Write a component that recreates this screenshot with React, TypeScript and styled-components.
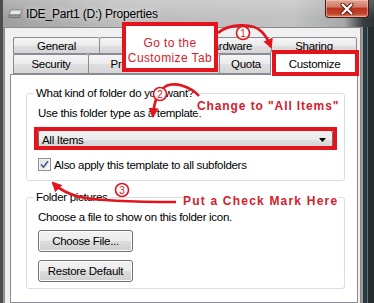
import React from "react";
import styled, { createGlobalStyle } from "styled-components";

const RED = "#e3141c";
const INK = "#d4202a";

const GlobalStyle = createGlobalStyle`
  html, body {
    margin: 0;
    padding: 0;
    background: #2c3133;
  }
  body {
    font-family: "Liberation Sans", Arial, sans-serif;
    font-size: 11.5px;
    color: #000;
  }
`;

const Stage = styled.div`
  position: relative;
  width: 374px;
  height: 303px;
  overflow: hidden;
`;

const Screen = styled.div`
  width: 100%;
  height: 100%;
  box-sizing: border-box;
  display: flex;
  flex-direction: column;
  border-left: 3px solid #4d4d4d;
  background: linear-gradient(to right, #9e9e9e 0, #bcbcbc 30%, #c2c2c2 78%, #a6a8a9 92%, #3a3f42 97%, #2c3133 100%);
`;

const TitleBar = styled.div`
  height: 27px;
  flex: none;
  display: flex;
  align-items: center;
  padding-left: 5px;
  background: linear-gradient(to bottom, rgba(255, 255, 255, 0.22), rgba(255, 255, 255, 0) 70%);
`;

const Title = styled.span`
  margin-left: 3px;
  font-size: 12px;
  letter-spacing: -0.2px;
  color: #000;
  text-shadow: 0 0 6px rgba(255, 255, 255, 0.9);
`;

const CloseButton = styled.div`
  align-self: flex-start;
  margin-left: auto;
  margin-right: 5px;
  width: 44px;
  height: 18px;
  box-sizing: border-box;
  display: flex;
  align-items: center;
  justify-content: center;
  border: 1px solid #4a1a14;
  border-top: none;
  border-radius: 0 0 4px 4px;
  background: linear-gradient(to bottom, #e2a595 0, #d27a66 40%, #b8341f 50%, #c2442c 80%, #df8a6c 100%);
  box-shadow: inset 0 0 0 1px rgba(255, 220, 210, 0.45);
`;

const Body = styled.div`
  flex: 1;
  display: flex;
  min-height: 0;
`;

const LeftEdge = styled.div`
  width: 1px;
  background: #9a9a9a;
`;

const Client = styled.div`
  width: 357px;
  flex: none;
  box-sizing: border-box;
  display: flex;
  flex-direction: column;
  background: #f0f0f0;
  border: 1px solid #8a8a8a;
  border-bottom: none;
  padding: 9px 2px 0 5px;
`;

const RightFrame = styled.div`
  flex: 1;
  background: linear-gradient(to right, #9c9c9c 0, #9c9c9c 2px, #30383b 2px, #30383b 6px, #3f7f8c 6px, #3f7f8c 7px, #262c2e 7px);
`;

const TabArea = styled.div`
  padding: 0 1px 0 3px;
  display: flex;
  flex-direction: column;
`;

const TabRow = styled.div<{ $h: number }>`
  display: flex;
  height: ${(p) => p.$h}px;
`;

const Tab = styled.div<{ $w: number; $active?: boolean }>`
  flex: none;
  box-sizing: border-box;
  width: ${(p) => p.$w}px;
  display: flex;
  align-items: center;
  justify-content: center;
  border: 1px solid #898c95;
  border-right: none;
  border-radius: 2px 2px 0 0;
  letter-spacing: -0.3px;
  background: linear-gradient(to bottom, #f5f5f5, #ebebeb 50%, #dfdfdf 51%, #d6d6d6);
  &:last-child {
    border-right: 1px solid #898c95;
  }
  ${(p) =>
    p.$active &&
    `
    position: relative;
    z-index: 1;
    height: 24px;
    margin: -3px -2px -1px -2px;
    width: ${p.$w + 4}px;
    background: #fff;
    border-bottom: none;
  `}
`;

const Panel = styled.div`
  flex: 1;
  background: #fff;
  border: 1px solid #898c95;
  padding: 0 12px 0 15px;
`;

const Group = styled.fieldset<{ $gap: number }>`
  margin: ${(p) => p.$gap}px 0 0;
  padding: 0 10px 0 11px;
  border: 1px solid #d5dfe5;
  border-radius: 3px;
  min-width: 0;
`;

const Legend = styled.legend`
  padding: 0 2px;
  margin-left: -4px;
  line-height: 14px;
  letter-spacing: -0.3px;
`;

const Line = styled.div<{ $top: number }>`
  margin-top: ${(p) => p.$top}px;
  line-height: 14px;
  letter-spacing: -0.3px;
  white-space: nowrap;
`;

const Combo = styled.div`
  margin-top: 10px;
  height: 20px;
  box-sizing: border-box;
  display: flex;
  align-items: center;
  justify-content: space-between;
  padding: 0 6px 0 3px;
  margin-right: 1px;
  border: 1px solid #707070;
  border-radius: 3px;
  letter-spacing: -0.3px;
  background: linear-gradient(to bottom, #f2f2f2, #ebebeb 50%, #dddddd 51%, #cfcfcf);
`;

const CheckRow = styled.label`
  margin-top: 8px;
  margin-bottom: 9px;
  display: flex;
  align-items: center;
  gap: 3px;
  height: 13px;
  letter-spacing: -0.3px;
  white-space: nowrap;
`;

const CheckBox = styled.span`
  width: 13px;
  height: 13px;
  box-sizing: border-box;
  border: 1px solid #8e8f8f;
  background: linear-gradient(to bottom right, #dcdcdc, #fbfbfb);
  box-shadow: inset 0 0 0 1px #f4f4f4;
  display: flex;
  align-items: center;
  justify-content: center;
`;

const Button = styled.div<{ $top: number }>`
  margin-top: ${(p) => p.$top}px;
  width: 95px;
  height: 22px;
  box-sizing: border-box;
  display: flex;
  align-items: center;
  justify-content: center;
  border: 1px solid #707070;
  border-radius: 3px;
  letter-spacing: -0.3px;
  background: linear-gradient(to bottom, #f2f2f2, #ebebeb 50%, #dddddd 51%, #cfcfcf);
  box-shadow: inset 0 0 0 1px #fcfcfc;
`;

const ButtonStack = styled.div`
  padding-bottom: 6px;
`;

/* annotation layer, drawn over the dialog */

const Annotations = styled.div`
  position: absolute;
  inset: 0;
  z-index: 5;
  pointer-events: none;
`;

const Frame = styled.div<{ $x: number; $y: number; $w: number; $h: number; $fill?: boolean }>`
  position: absolute;
  left: ${(p) => p.$x}px;
  top: ${(p) => p.$y}px;
  width: ${(p) => p.$w}px;
  height: ${(p) => p.$h}px;
  box-sizing: border-box;
  border: 4px solid ${RED};
  background: ${(p) => (p.$fill ? "#fff" : "transparent")};
`;

const CalloutText = styled.div`
  padding-top: 10px;
  text-align: center;
  color: ${INK};
  font-size: 12px;
  line-height: 15px;
  letter-spacing: 0.4px;
`;

const Note = styled.div<{ $x: number; $y: number; $spacing: number }>`
  position: absolute;
  left: ${(p) => p.$x}px;
  top: ${(p) => p.$y}px;
  color: ${INK};
  font-weight: bold;
  font-size: 12px;
  line-height: 14px;
  letter-spacing: ${(p) => p.$spacing}px;
  white-space: nowrap;
  background: #fff;
`;

const Overlay = styled.svg`
  position: absolute;
  left: 0;
  top: 0;
`;

const DriveIcon = () => (
  <svg width="15" height="10" viewBox="0 0 15 10">
    <path d="M3 1 L14 1 L12 6 L1 6 Z" fill="#e8e8e8" stroke="#7d7d7d" strokeWidth="0.8" />
    <path d="M1 6 L12 6 L12 8.5 L1 8.5 Z" fill="#9a9a9a" stroke="#6a6a6a" strokeWidth="0.8" />
    <path d="M12 6 L14 1 L14 3.5 L12 8.5 Z" fill="#8a8a8a" />
    <rect x="9" y="6.8" width="2" height="1" fill="#3fd04a" />
  </svg>
);

const CloseX = () => (
  <svg width="14" height="12" viewBox="0 0 14 12">
    <path d="M2.5 1.5 L11.5 10.5 M11.5 1.5 L2.5 10.5" stroke="#5a1a10" strokeWidth="4" strokeLinecap="round" />
    <path d="M2.5 1.5 L11.5 10.5 M11.5 1.5 L2.5 10.5" stroke="#fff" strokeWidth="2.2" strokeLinecap="round" />
  </svg>
);

const Tick = () => (
  <svg width="9" height="9" viewBox="0 0 9 9">
    <path d="M1 4.5 L3.5 7.2 L8 1.2" fill="none" stroke="#4a5e8c" strokeWidth="1.7" />
  </svg>
);

const Caret = () => (
  <svg width="7" height="4" viewBox="0 0 7 4">
    <path d="M0 0 L7 0 L3.5 4 Z" fill="#000" />
  </svg>
);

const Step = ({ cx, cy, n }: { cx: number; cy: number; n: string }) => (
  <g>
    <circle cx={cx} cy={cy} r="6.5" fill="#fff" stroke={RED} strokeWidth="1.6" />
    <text
      x={cx}
      y={cy + 3.6}
      textAnchor="middle"
      fontFamily="Liberation Sans, Arial, sans-serif"
      fontSize="10"
      fill={RED}
    >
      {n}
    </text>
  </g>
);

const row1 = [
  { label: "General", w: 86 },
  { label: "Tools", w: 86 },
  { label: "Hardware", w: 86 },
  { label: "Sharing", w: 86 },
];
const row2 = [
  { label: "Security", w: 75 },
  { label: "Previous Versions", w: 131 },
  { label: "Quota", w: 53 },
  { label: "Customize", w: 85, active: true },
];

export default function App() {
  return (
    <Stage>
      <GlobalStyle />
      <Screen>
        <TitleBar>
          <DriveIcon />
          <Title>IDE_Part1 (D:) Properties</Title>
          <CloseButton>
            <CloseX />
          </CloseButton>
        </TitleBar>
        <Body>
          <LeftEdge />
          <Client>
            <TabArea>
              <TabRow $h={17}>
                {row1.map((t) => (
                  <Tab key={t.label} $w={t.w}>
                    {t.label}
                  </Tab>
                ))}
              </TabRow>
              <TabRow $h={20}>
                {row2.map((t) => (
                  <Tab key={t.label} $w={t.w} $active={t.active}>
                    {t.label}
                  </Tab>
                ))}
              </TabRow>
            </TabArea>
            <Panel>
              <Group $gap={11}>
                <Legend>What kind of folder do you want?</Legend>
                <Line $top={6}>Use this folder type as a template:</Line>
                <Combo>
                  <span>All Items</span>
                  <Caret />
                </Combo>
                <CheckRow>
                  <CheckBox>
                    <Tick />
                  </CheckBox>
                  Also apply this template to all subfolders
                </CheckRow>
              </Group>
              <Group $gap={9}>
                <Legend>Folder pictures</Legend>
                <Line $top={6}>Choose a file to show on this folder icon.</Line>
                <ButtonStack>
                  <Button $top={6}>Choose File...</Button>
                  <Button $top={8}>Restore Default</Button>
                </ButtonStack>
              </Group>
            </Panel>
          </Client>
          <RightFrame />
        </Body>
      </Screen>

      <Annotations>
        <Frame $x={122} $y={22} $w={96} $h={50} $fill>
          <CalloutText>
            Go to the
            <br />
            Customize Tab
          </CalloutText>
        </Frame>
        <Frame $x={272} $y={50} $w={87} $h={26} />
        <Frame $x={34} $y={127} $w={303} $h={23} />
        <Note $x={197} $y={99} $spacing={0.9}>
          Change to "All Items"
        </Note>
        <Note $x={183} $y={194} $spacing={1.2}>
          Put a Check Mark Here
        </Note>

        <Overlay width="374" height="303" viewBox="0 0 374 303">
          <defs>
            <marker id="head" viewBox="0 0 10 10" refX="8" refY="5" markerWidth="10" markerHeight="10" markerUnits="userSpaceOnUse" orient="auto">
              <path d="M0 0 L10 5 L0 10 Z" fill={RED} />
            </marker>
          </defs>
          <path d="M218 33 C228 24 252 22 262 32 C267 37 269 42 271 47" fill="none" stroke={RED} strokeWidth="2.6" markerEnd="url(#head)" />
          <path d="M199 96 C190 86 175 82 166 86 C157 92 154 102 153 116" fill="none" stroke={RED} strokeWidth="2.6" markerEnd="url(#head)" />
          <path d="M176 202 C140 202 100 201 80 197 C68 194 60 190 53 183" fill="none" stroke={RED} strokeWidth="2.6" markerEnd="url(#head)" />
          <Step cx={243} cy={33} n="1" />
          <Step cx={160} cy={94} n="2" />
          <Step cx={122} cy={190} n="3" />
        </Overlay>
      </Annotations>
    </Stage>
  );
}
